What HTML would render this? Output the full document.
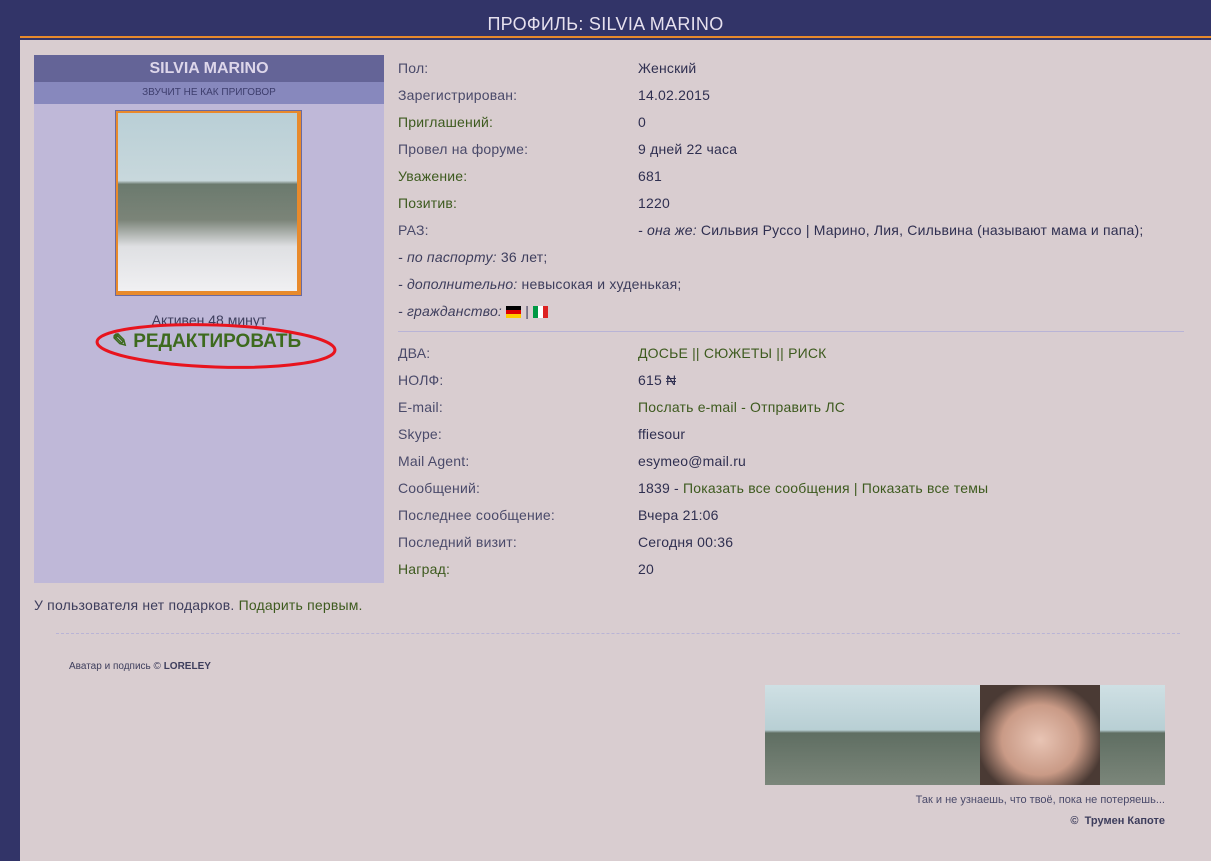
<!DOCTYPE html><html><head><meta charset="utf-8"><style>
body{margin:0;width:1211px;height:861px;background:#323468;font-family:"Liberation Sans",sans-serif;position:relative;overflow:hidden;font-size:14px;color:#3d3d5c}
.a{position:absolute}
.hd{left:0;top:0;width:1211px;height:36px;text-align:center;color:#e6e0ee;font-size:18px;line-height:48px;letter-spacing:0.3px}
.ol{left:20px;top:36px;width:1191px;height:2px;background:#e88a2c}
.ct{left:20px;top:40px;width:1191px;height:821px;background:#d9cdd0}
.lc{left:34px;top:55px;width:350px;height:528px;background:#bfb8d8}
.lh{left:34px;top:55px;width:350px;height:27px;background:#646497;color:#ddd6ea;font-weight:bold;font-size:16px;text-align:center;line-height:27px}
.ls{left:34px;top:82px;width:350px;height:22px;background:#8788bd;color:#3d3d6c;font-size:10px;text-align:center;line-height:22px}
.av{left:115px;top:110px;width:183px;height:182px;border:1px solid #6a6aa0;padding:1px;background:#e88a2c}
.av div{width:179px;height:178px;margin:1px;background:linear-gradient(180deg,#b9cfd6 0%,#c8d8dc 38%,#6b7a6e 40%,#7b8478 60%,#dfe0e3 75%,#f0f0f2 100%)}
.r{left:398px;font-size:14px;letter-spacing:0.2px}
.v{left:638px;font-size:14px;color:#2f2f50;letter-spacing:0.2px}
.g{color:#3d5a1e}
.lb{color:#4a4a6a}
.b{color:#3d5a1e}
</style></head><body>
<div class="a hd">ПРОФИЛЬ: SILVIA MARINO</div>
<div class="a ol"></div>
<div class="a ct"></div>
<div class="a lc"></div>
<div class="a lh">SILVIA MARINO</div>
<div class="a ls">ЗВУЧИТ НЕ КАК ПРИГОВОР</div>
<div class="a av"><div></div></div>
<div class="a" style="left:34px;top:312px;width:350px;text-align:center;font-size:14px;color:#3d3d5c">Активен 48 минут</div>
<div class="a" style="left:112px;top:330px;font-size:19px;font-weight:bold;color:#3d6a1e">&#9998; РЕДАКТИРОВАТЬ</div>
<svg class="a" style="left:95px;top:322px" width="245" height="52"><ellipse cx="121" cy="24" rx="119" ry="21" fill="none" stroke="#e8141e" stroke-width="3" transform="rotate(2 121 24)"/></svg>

<div class="a r lb" style="top:60px">Пол:</div><div class="a v" style="top:60px">Женский</div>
<div class="a r lb" style="top:87px">Зарегистрирован:</div><div class="a v" style="top:87px">14.02.2015</div>
<div class="a r b" style="top:114px">Приглашений:</div><div class="a v" style="top:114px">0</div>
<div class="a r lb" style="top:141px">Провел на форуме:</div><div class="a v" style="top:141px">9 дней 22 часа</div>
<div class="a r b" style="top:168px">Уважение:</div><div class="a v" style="top:168px">681</div>
<div class="a r b" style="top:195px">Позитив:</div><div class="a v" style="top:195px">1220</div>
<div class="a r lb" style="top:222px">РАЗ:</div><div class="a v" style="top:222px"><i>- она же:</i> Сильвия Руссо | Марино, Лия, Сильвина (называют мама и папа);</div>
<div class="a r" style="top:249px"><i>- по паспорту:</i> 36 лет;</div>
<div class="a r" style="top:276px"><i>- дополнительно:</i> невысокая и худенькая;</div>
<div class="a r" style="top:303px"><i>- гражданство:</i> <span style="display:inline-block;width:15px;height:12px;background:linear-gradient(#000 33%,#d00 33%,#d00 66%,#fc0 66%);vertical-align:middle"></span> | <span style="display:inline-block;width:15px;height:12px;background:linear-gradient(90deg,#094 33%,#fff 33%,#fff 66%,#d22 66%);vertical-align:middle"></span></div>
<div class="a" style="left:398px;top:331px;width:786px;height:1px;background:#b9b4d6"></div>
<div class="a r lb" style="top:345px">ДВА:</div><div class="a v g" style="top:345px">ДОСЬЕ || СЮЖЕТЫ || РИСК</div>
<div class="a r lb" style="top:372px">НОЛФ:</div><div class="a v" style="top:372px">615 ₦</div>
<div class="a r lb" style="top:399px">E-mail:</div><div class="a v g" style="top:399px">Послать e-mail - Отправить ЛС</div>
<div class="a r lb" style="top:426px">Skype:</div><div class="a v" style="top:426px">ffiesour</div>
<div class="a r lb" style="top:453px">Mail Agent:</div><div class="a v" style="top:453px">esymeo@mail.ru</div>
<div class="a r lb" style="top:480px">Сообщений:</div><div class="a v" style="top:480px">1839 - <span class="g">Показать все сообщения | Показать все темы</span></div>
<div class="a r lb" style="top:507px">Последнее сообщение:</div><div class="a v" style="top:507px">Вчера 21:06</div>
<div class="a r lb" style="top:534px">Последний визит:</div><div class="a v" style="top:534px">Сегодня 00:36</div>
<div class="a r b" style="top:561px">Наград:</div><div class="a v" style="top:561px">20</div>
<div class="a" style="left:34px;top:597px;letter-spacing:0.2px">У пользователя нет подарков. <span class="g">Подарить первым.</span></div>
<div class="a" style="left:56px;top:633px;width:1124px;border-top:1px dashed #b9b4d6"></div>
<div class="a" style="left:69px;top:661px;font-size:10px">Аватар и подпись © <b>LORELEY</b></div>
<div class="a" style="left:765px;top:685px;width:400px;height:100px;background:linear-gradient(180deg,#cfe0e4 0%,#b8cfd4 45%,#5f6e62 48%,#7b867a 100%)"><div style="position:absolute;left:215px;top:0;width:120px;height:100px;background:radial-gradient(ellipse at 50% 55%,#e8c4b4 0%,#c99a86 45%,#4a3a34 75%)"></div></div>
<div class="a" style="left:765px;top:794px;width:400px;text-align:right;font-size:11px;color:#4a4a6a">Так и не узнаешь, что твоё, пока не потеряешь...</div>
<div class="a" style="left:765px;top:815px;width:400px;text-align:right;font-size:11px;font-weight:bold;color:#3d3d5c">©&nbsp; Трумен Капоте</div>
</body></html>
